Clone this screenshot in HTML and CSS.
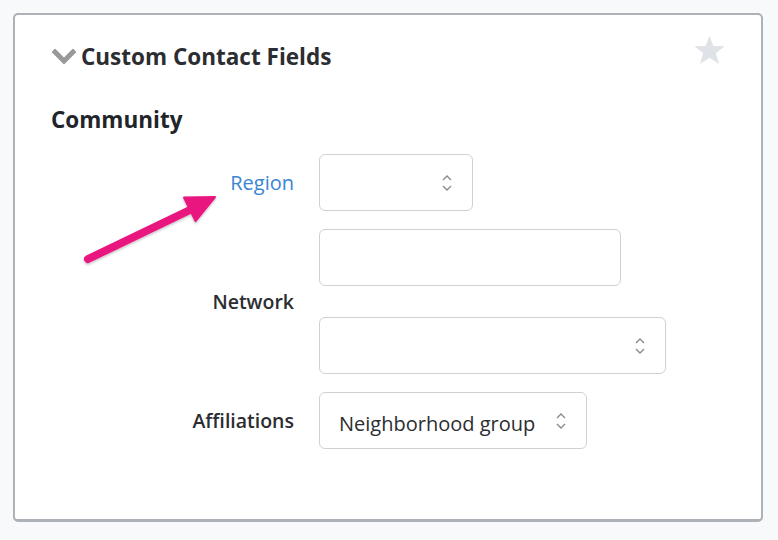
FILE: index.html
```html
<!DOCTYPE html>
<html>
<head>
<meta charset="utf-8">
<link rel="stylesheet" href="styles.css">
</head>
<body>
<div class="card">
  <div class="card-head">
    <div class="title-wrap">
      <svg class="chev" width="24" height="16" viewBox="0 0 24 16"><path d="M3 3 L12 12 L21 3" fill="none" stroke="#999" stroke-width="5" stroke-linecap="square"/></svg>
      <h2 class="title">Custom Contact Fields</h2>
    </div>
    <svg class="star" width="33" height="31" viewBox="0 0 24 23"><path d="M12 0.5 L14.9 8.2 L23.2 8.4 L16.7 13.5 L19.1 21.5 L12 16.8 L4.9 21.5 L7.3 13.5 L0.8 8.4 L9.1 8.2 Z" fill="#dfe2e6"/></svg>
  </div>
  <h3 class="section">Community</h3>
  <div class="form">
    <div class="label blue">Region</div>
    <div class="controls">
      <div class="select w-region"><span></span><svg class="updown" width="10" height="18" viewBox="0 0 10 18"><path d="M1 6 L5 2 L9 6 M1 12 L5 16 L9 12" fill="none" stroke="#888" stroke-width="1.3"/></svg></div>
    </div>
    <div class="label">Network</div>
    <div class="controls gap-net">
      <div class="input w-input"></div>
      <div class="select w-net"><span></span><svg class="updown" width="10" height="18" viewBox="0 0 10 18"><path d="M1 6 L5 2 L9 6 M1 12 L5 16 L9 12" fill="none" stroke="#888" stroke-width="1.3"/></svg></div>
    </div>
    <div class="label">Affiliations</div>
    <div class="controls">
      <div class="select w-aff"><span class="val">Neighborhood group</span><svg class="updown" width="10" height="18" viewBox="0 0 10 18"><path d="M1 6 L5 2 L9 6 M1 12 L5 16 L9 12" fill="none" stroke="#888" stroke-width="1.3"/></svg></div>
    </div>
  </div>
  <svg class="annot" width="160" height="90" viewBox="0 0 160 90">
    <defs><filter id="sh" x="-20%" y="-20%" width="140%" height="140%"><feDropShadow dx="0" dy="1.5" stdDeviation="1.2" flood-color="#000" flood-opacity="0.25"/></filter></defs>
    <g filter="url(#sh)">
      <path d="M18 74 L122 24" stroke="#ea1680" stroke-width="8" stroke-linecap="round" fill="none"/>
      <path d="M145 12 L114 12.6 L125.5 36 Z" fill="#ea1680" stroke="#ea1680" stroke-width="2" stroke-linejoin="round"/>
    </g>
  </svg>
</div>
</body>
</html>
```
FILE: styles.css
```css
* { box-sizing: border-box; }
html, body { margin: 0; padding: 0; }
body {
  background: #f8f9fb;
  padding: 13px 15px 18px 13px;
  font-family: "Open Sans", "Noto Sans", sans-serif;
  color: #212529;
}
.card {
  position: relative;
  width: 750px;
  height: 509px;
  background: #fff;
  border: 2px solid #adb1b8;
  border-bottom-width: 3px;
  border-radius: 5px;
  padding: 20px 36px 0 36px;
}
.card-head {
  display: flex;
  justify-content: space-between;
  align-items: flex-start;
}
.title-wrap {
  display: flex;
  align-items: center;
  gap: 5px;
  padding-top: 6px;
}
.chev { margin-left: 1px; }
.title {
  margin: 0;
  font-size: 22.5px;
  font-weight: 700;
  color: #2b2d31;
  line-height: 32px;
}
.star { margin-top: 0; margin-right: -1px; }
.section {
  margin: 32px 0 19px;
  font-size: 22.5px;
  font-weight: 700;
  color: #212529;
  line-height: 30px;
}
.form {
  display: grid;
  grid-template-columns: 243px auto;
  column-gap: 25px;
  row-gap: 18px;
  align-items: center;
}
.label {
  text-align: right;
  font-size: 19.5px;
  font-weight: 600;
  color: #2b2d31;
}
.label.blue { color: #3a85d3; font-weight: 500; font-size: 20px; }
.controls {
  display: flex;
  flex-direction: column;
  align-items: flex-start;
}
.gap-net { gap: 31px; }
.select, .input {
  height: 57px;
  border: 1px solid #ced1d6;
  border-radius: 6px;
  background: #fff;
}
.select {
  display: flex;
  align-items: center;
  justify-content: space-between;
  padding: 0 20px 0 19px;
}
.val { font-size: 20px; color: #2b2d31; padding-top: 5px; }
.w-region { width: 154px; }
.w-input { width: 302px; }
.w-net { width: 347px; }
.w-aff { width: 268px; }
.annot {
  position: absolute;
  left: 55px;
  top: 170px;
}
```
